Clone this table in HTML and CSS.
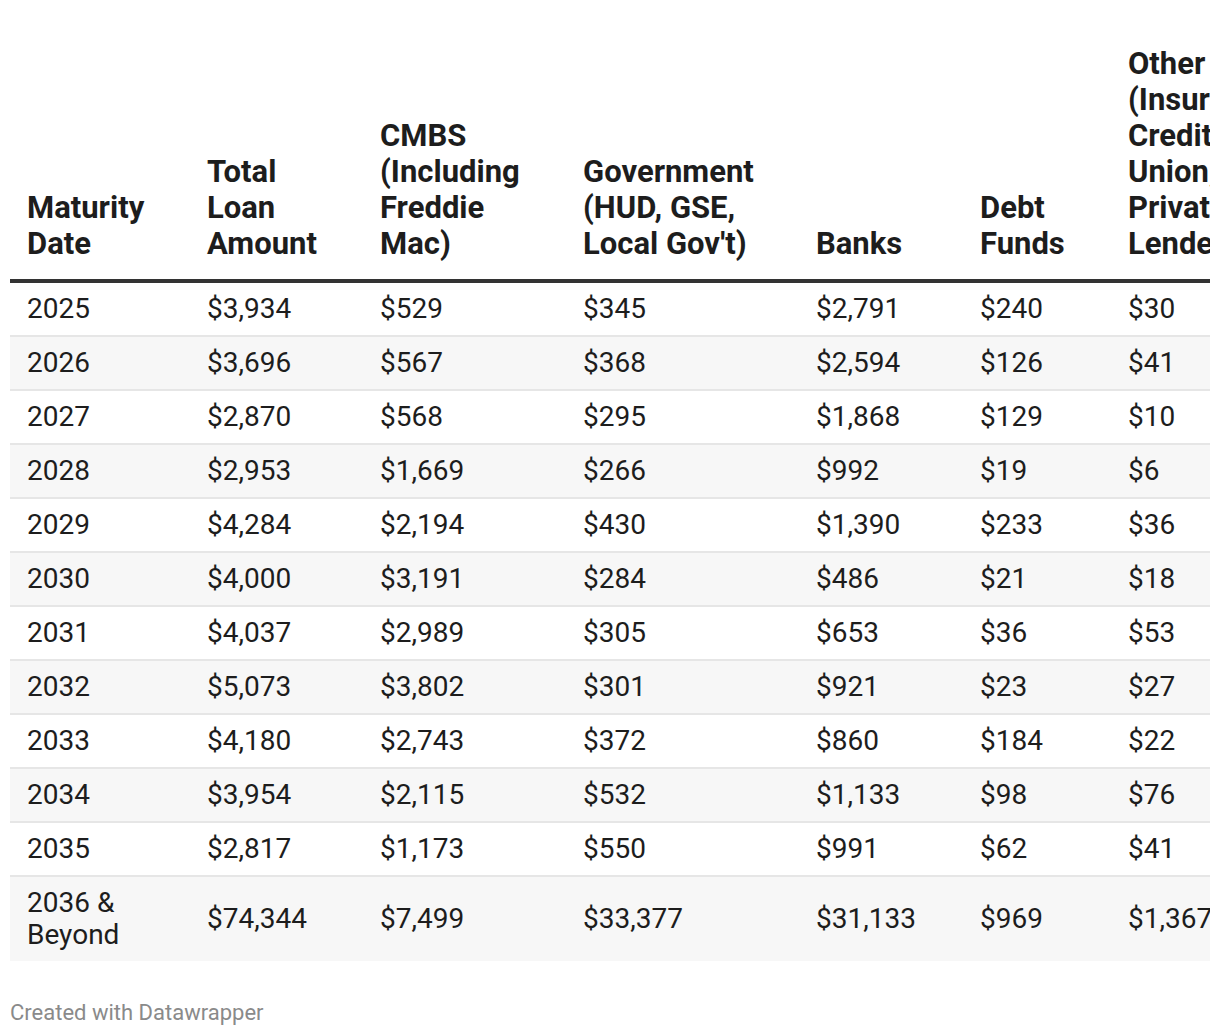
FILE: index.html
```html
<!DOCTYPE html>
<html lang="en">
<head>
<meta charset="utf-8">
<title>Loan Maturities</title>
<link rel="stylesheet" href="styles.css">
</head>
<body>
<div class="chart">
  <div class="table-wrap">
    <table class="data">
      <colgroup>
        <col class="c1"><col class="c2"><col class="c3"><col class="c4"><col class="c5"><col class="c6"><col class="c7">
      </colgroup>
      <thead>
        <tr>
          <th>Maturity Date</th>
          <th>Total Loan Amount</th>
          <th>CMBS (Including Freddie Mac)</th>
          <th>Government (HUD, GSE, Local Gov't)</th>
          <th>Banks</th>
          <th>Debt Funds</th>
          <th>Other (Insurance, Credit Union, Private Lender)</th>
        </tr>
      </thead>
      <tbody>
        <tr><td>2025</td><td>$3,934</td><td>$529</td><td>$345</td><td>$2,791</td><td>$240</td><td>$30</td></tr>
        <tr><td>2026</td><td>$3,696</td><td>$567</td><td>$368</td><td>$2,594</td><td>$126</td><td>$41</td></tr>
        <tr><td>2027</td><td>$2,870</td><td>$568</td><td>$295</td><td>$1,868</td><td>$129</td><td>$10</td></tr>
        <tr><td>2028</td><td>$2,953</td><td>$1,669</td><td>$266</td><td>$992</td><td>$19</td><td>$6</td></tr>
        <tr><td>2029</td><td>$4,284</td><td>$2,194</td><td>$430</td><td>$1,390</td><td>$233</td><td>$36</td></tr>
        <tr><td>2030</td><td>$4,000</td><td>$3,191</td><td>$284</td><td>$486</td><td>$21</td><td>$18</td></tr>
        <tr><td>2031</td><td>$4,037</td><td>$2,989</td><td>$305</td><td>$653</td><td>$36</td><td>$53</td></tr>
        <tr><td>2032</td><td>$5,073</td><td>$3,802</td><td>$301</td><td>$921</td><td>$23</td><td>$27</td></tr>
        <tr><td>2033</td><td>$4,180</td><td>$2,743</td><td>$372</td><td>$860</td><td>$184</td><td>$22</td></tr>
        <tr><td>2034</td><td>$3,954</td><td>$2,115</td><td>$532</td><td>$1,133</td><td>$98</td><td>$76</td></tr>
        <tr><td>2035</td><td>$2,817</td><td>$1,173</td><td>$550</td><td>$991</td><td>$62</td><td>$41</td></tr>
        <tr><td>2036 &amp; Beyond</td><td>$74,344</td><td>$7,499</td><td>$33,377</td><td>$31,133</td><td>$969</td><td>$1,367</td></tr>
      </tbody>
    </table>
  </div>
  <div class="footer">Created with Datawrapper</div>
</div>
</body>
</html>
```

FILE: styles.css
```css
html, body {
  margin: 0;
  padding: 0;
  background: #ffffff;
}

body {
  font-family: Roboto, "Liberation Sans", sans-serif;
  color: #1d1d1d;
}

.chart {
  padding: 37px 0 0 10px;
}

.table-wrap {
  width: 1200px;
  overflow: hidden;
}

.data {
  border-collapse: collapse;
  table-layout: fixed;
  width: 1310px;
  font-size: 28px;
}

.c1 { width: 180px; }
.c2 { width: 173px; }
.c3 { width: 203px; }
.c4 { width: 233px; }
.c5 { width: 164px; }
.c6 { width: 148px; }
.c7 { width: 209px; }

.data th {
  text-align: left;
  vertical-align: bottom;
  font-size: 31px;
  font-weight: 700;
  line-height: 36px;
  padding: 9px 17px 17px 17px;
  border-bottom: 4px solid #333333;
  color: #1d1d1d;
}

.data td {
  text-align: left;
  vertical-align: middle;
  line-height: 32px;
  padding: 10px 0 10px 17px;
  border-bottom: 2px solid #e6e6e6;
  white-space: nowrap;
}

.data tbody tr:last-child td {
  white-space: normal;
  border-bottom: none;
}

.data tbody tr:nth-child(even) {
  background: #f7f7f7;
}

.footer {
  margin-top: 38px;
  font-size: 22px;
  line-height: 28px;
  color: #8a8a8a;
}
```
